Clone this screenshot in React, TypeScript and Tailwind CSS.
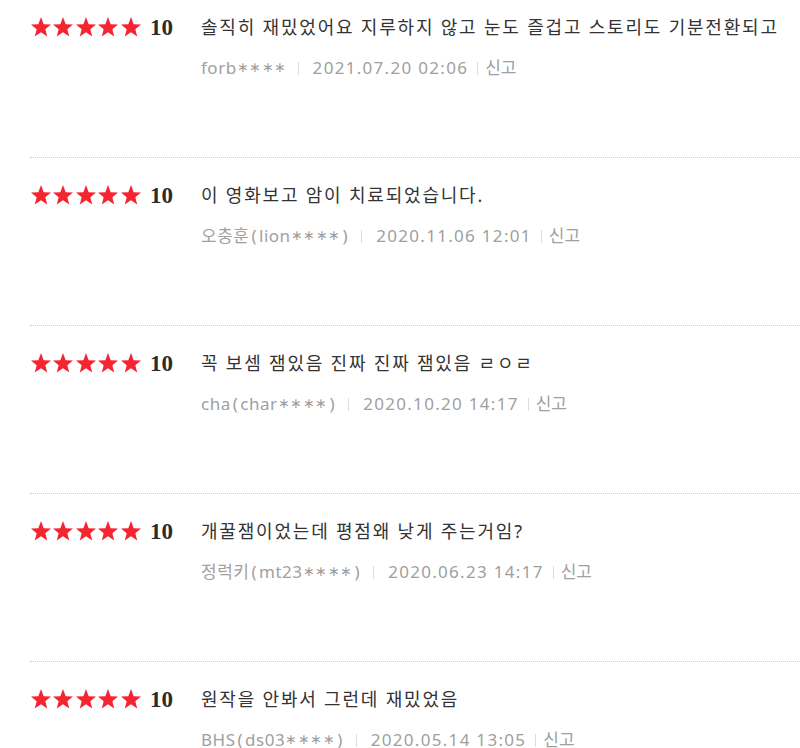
import {Fragment} from "react";

type Review = {
    text: string;
    writer: string;
    date: string;
};

const reviews: Review[] = [
    {text: "솔직히 재밌었어요 지루하지 않고 눈도 즐겁고 스토리도 기분전환되고", writer: "forb****", date: "2021.07.20 02:06"},
    {text: "이 영화보고 암이 치료되었습니다.", writer: "오충훈(lion****)", date: "2020.11.06 12:01"},
    {text: "꼭 보셈 잼있음 진짜 진짜 잼있음 ㄹㅇㄹ", writer: "cha(char****)", date: "2020.10.20 14:17"},
    {text: "개꿀잼이었는데 평점왜 낮게 주는거임?", writer: "정럭키(mt23****)", date: "2020.06.23 14:17"},
    {text: "원작을 안봐서 그런데 재밌었음", writer: "BHS(ds03****)", date: "2020.05.14 13:05"},
];

function Star() {
    return (
        <svg width="22" height="22" viewBox="0 0 24 24" className="shrink-0">
            <polygon
                points="12,1.2 14.9,8.9 22.9,9.3 16.7,14.4 18.8,22.3 12,17.8 5.2,22.3 7.3,14.4 1.1,9.3 9.1,8.9"
                fill="#f42530"
            />
        </svg>
    );
}

function Writer({name}: {name: string}) {
    // masked part of the id is drawn with small raised asterisks, parens get a bit of air
    const parts = name.split(/(\*+|[()])/).filter(Boolean);
    return (
        <span className="tracking-[0.5px]">
            {parts.map((p, i) => {
                if (p.startsWith("*"))
                    return <span key={i} className="text-[14px] relative -top-[2px]">{p.split("").map(() => "∗").join("")}</span>;
                if (p === "(" || p === ")")
                    return <span key={i} className="mx-[2px]">{p}</span>;
                return <Fragment key={i}>{p}</Fragment>;
            })}
        </span>
    );
}

function ReviewItem({review, first}: {review: Review; first: boolean}) {
    return (
        <li className={first ? "pt-[14px] pb-[78px]" : "pt-[24px] pb-[78px] border-t border-dotted border-[#cfcfcf]"}>
            <div className="flex items-center h-[26px]">
                <div className="flex items-center gap-[0.4px] w-[120px]">
                    <Star/><Star/><Star/><Star/><Star/>
                </div>
                <span className="w-[51px] text-[23px] font-bold text-[#2b2b2b] leading-none"
                      style={{fontFamily: '"Liberation Serif", serif'}}>
                    10
                </span>
                <p className="text-[18px] text-[#333] tracking-[1.8px] whitespace-nowrap">{review.text}</p>
            </div>
            <div className="flex items-center h-[22px] mt-[17px] pl-[171px] text-[17px] text-[#a0a0a0]">
                <Writer name={review.writer}/>
                <span className="w-px h-[13px] bg-[#dcdcdc] ml-[11px] mr-[14px]"/>
                <span className="tracking-[1.3px]">{review.date}</span>
                <span className="w-px h-[13px] bg-[#dcdcdc] ml-[9px] mr-[7px]"/>
                <span>신고</span>
            </div>
        </li>
    );
}

export default function App() {
    return (
        <div className="w-[800px] h-[748px] overflow-hidden bg-white"
             style={{fontFamily: '"Noto Sans", "Noto Sans CJK KR", sans-serif'}}>
            <ul className="ml-[30px]">
                {reviews.map((r, i) => <ReviewItem key={i} review={r} first={i === 0}/>)}
            </ul>
        </div>
    );
}
